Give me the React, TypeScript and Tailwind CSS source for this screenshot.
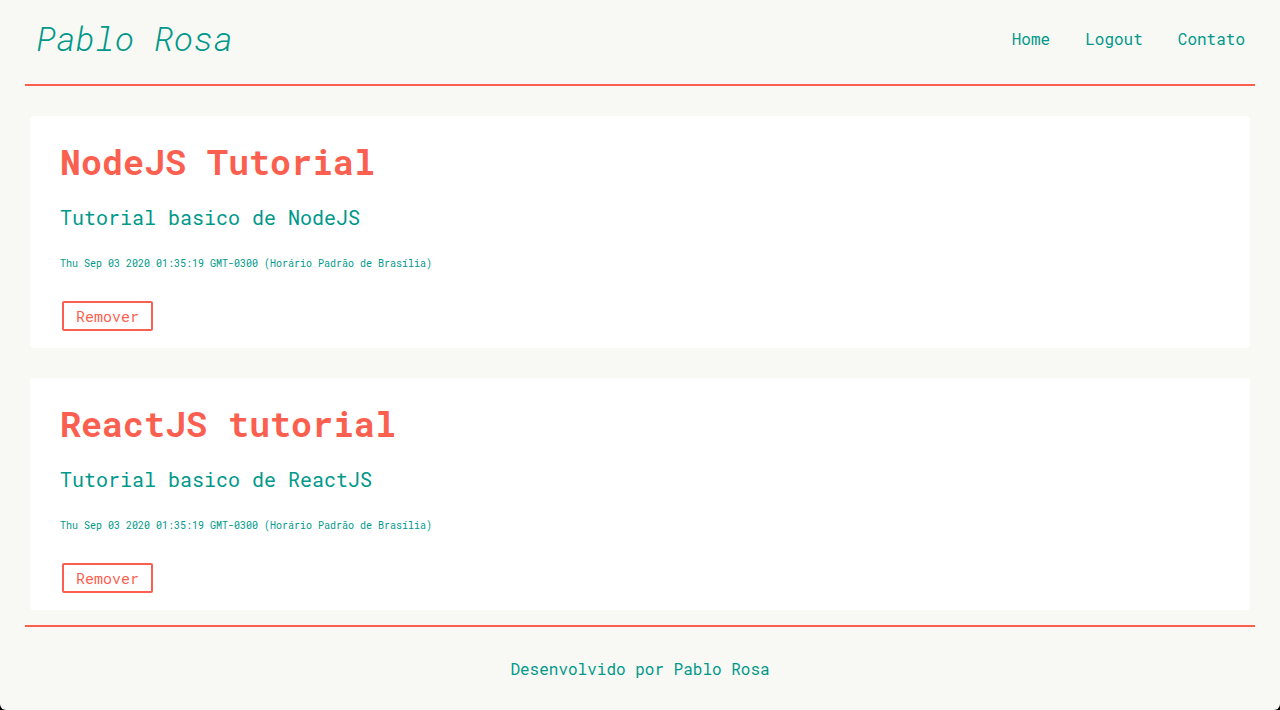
import React from 'react';

interface Post { title: string; description: string; date: string }

const posts: Post[] = [
  {
    title: 'NodeJS Tutorial',
    description: 'Tutorial basico de NodeJS',
    date: 'Thu Sep 03 2020 01:35:19 GMT-0300 (Horário Padrão de Brasília)',
  },
  {
    title: 'ReactJS tutorial',
    description: 'Tutorial basico de ReactJS',
    date: 'Thu Sep 03 2020 01:35:19 GMT-0300 (Horário Padrão de Brasília)',
  },
];

function PostCard({ post }: { post: Post }) {
  return (
    <div className="bg-white rounded-[4px] h-[232px] pl-[30px] pt-[23px]">
      <h1 className="text-[35px] leading-[44px] font-bold text-[#fa5f50]">{post.title}</h1>
      <h2 className="mt-[21px] text-[20px] leading-[26px] font-normal text-[#00988a]">{post.description}</h2>
      <p className="mt-[27px] text-[10px] leading-[14px] text-[#00988a]">{post.date}</p>
      <button className="mt-[30px] ml-[2px] h-[30px] px-[12px] border-2 border-[#fa5f50] rounded-[2px] text-[15px] leading-[24px] text-[#fa5f50] bg-white">
        Remover
      </button>
    </div>
  );
}

export default function App() {
  return (
    <div className="bg-black min-h-[710px]" style={{ fontFamily: '"Roboto Mono", "Liberation Mono", monospace' }}>
      <div className="bg-[#f8f8f4] h-[710px] rounded-b-[6px] px-[25px] flex flex-col">
        <header className="flex items-center justify-between h-[86px] border-b-2 border-[#fa5f50] pl-[11px] pr-[10px] pb-[7px]">
          <span className="italic font-light text-[33.5px] text-[#00988a]">Pablo Rosa</span>
          <nav className="flex gap-[35px] text-[16px] font-normal text-[#00988a]">
            <a href="#">Home</a>
            <a href="#">Logout</a>
            <a href="#">Contato</a>
          </nav>
        </header>
        <main className="flex flex-col gap-[30px] px-[5px] pt-[30px] pb-[15px]">
          {posts.map((p, i) => (
            <PostCard key={i} post={p} />
          ))}
        </main>
        <footer className="border-t-2 border-[#fa5f50] pt-[30px] text-center text-[16px] font-normal text-[#00988a]">
          Desenvolvido por Pablo Rosa
        </footer>
      </div>
    </div>
  );
}
